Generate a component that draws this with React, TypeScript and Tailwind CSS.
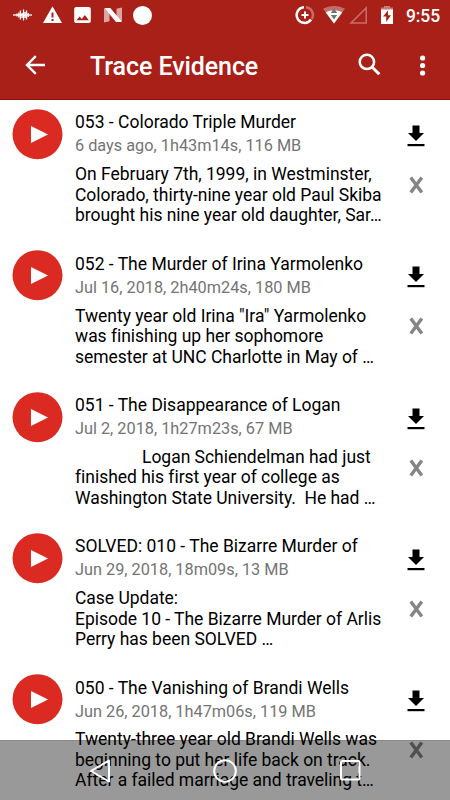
import clsx from 'clsx';

type Episode = {
  title: string;
  meta: string;
  lines: string[];
  indent?: boolean;
};

const episodes: Episode[] = [
  {
    title: '053 - Colorado Triple Murder',
    meta: '6 days ago, 1h43m14s, 116 MB',
    lines: ['On February 7th, 1999, in Westminster,', 'Colorado, thirty-nine year old Paul Skiba', 'brought his nine year old daughter, Sar…'],
  },
  {
    title: '052 - The Murder of Irina Yarmolenko',
    meta: 'Jul 16, 2018, 2h40m24s, 180 MB',
    lines: ['Twenty year old Irina "Ira" Yarmolenko', 'was finishing up her sophomore', 'semester at UNC Charlotte in May of …'],
  },
  {
    title: '051 - The Disappearance of Logan',
    meta: 'Jul 2, 2018, 1h27m23s, 67 MB',
    lines: ['Logan Schiendelman had just', 'finished his first year of college as', 'Washington State University.  He had …'],
    indent: true,
  },
  {
    title: 'SOLVED: 010 - The Bizarre Murder of',
    meta: 'Jun 29, 2018, 18m09s, 13 MB',
    lines: ['Case Update:', 'Episode 10 - The Bizarre Murder of Arlis', 'Perry has been SOLVED …'],
  },
  {
    title: '050 - The Vanishing of Brandi Wells',
    meta: 'Jun 26, 2018, 1h47m06s, 119 MB',
    lines: ['Twenty-three year old Brandi Wells was', 'beginning to put her life back on track.', 'After a failed marriage and traveling t…'],
  },
];

function StatusBar() {
  return (
    <div className="flex h-[30px] items-center justify-between pl-3 pr-[10px] text-white">
      <div className="flex items-center">
        <svg width="21" height="20" viewBox="0 0 21 20" stroke="currentColor" strokeWidth="1.3">
          <path d="M1 10h19" />
          <path d="M5 8.500v3M6.800 7.500v5M8.400 5.500v9M10 8v5M11.500 4.500v11M13 7v6M14.500 5.500v9M16.200 8v4" />
        </svg>
        <svg className="ml-[9px]" width="21" height="20" viewBox="0 0 21 20" fill="currentColor">
          <path fillRule="evenodd" d="M10.500 1.200 20 18H1ZM9.500 7.600v5h2v-5ZM9.500 14v2h2v-2Z" />
        </svg>
        <svg className="ml-[10px]" width="20" height="20" viewBox="0 0 20 20" fill="currentColor">
          <path fillRule="evenodd" d="M3.200 2h12.600c1.100 0 2 .9 2 2v12c0 1.100-.9 2-2 2H3.200c-1.100 0-2-.9-2-2V4c0-1.100.9-2 2-2ZM3.500 15.300h12.300l-3.900-5.200-3.100 4-2.200-2.600Z" />
        </svg>
        <svg className="ml-[10px]" width="20" height="20" viewBox="0 0 20 20" fill="currentColor">
          <path opacity=".6" d="M1 3.600 2.300 3l4.200 4v9.300L1 17.500ZM13.500 3.700l5.500-1.200v13.700l-1.300.6-4.200-4Z" />
          <path d="M2.300 3h5L18.700 16.500l-.7.500h-5L2.300 4Z" />
        </svg>
        <span className="ml-[10px] size-[19px] rounded-full bg-white" />
      </div>
      <div className="flex items-center">
        <svg width="20" height="20" viewBox="0 0 20 20" fill="none" stroke="currentColor" strokeWidth="2.500">
          <path opacity=".35" d="M11 2.200A7.800 7.800 0 0 1 16.800 14" />
          <path d="M9 2.200A7.850 7.850 0 1 0 16 14.500" />
          <path strokeWidth="2" d="M10 6.500v7M6.500 10h7" />
        </svg>
        <svg className="ml-[8px]" width="22" height="20" viewBox="0 0 22 20" fill="currentColor">
          <path opacity=".35" d="M0 3.800C6-.1 16-.1 22 3.800L11 18.500Z" />
          <path d="M2.800 7.500C7 4.500 15 4.500 19.200 7.500L11 18.500Z" />
          <path fill="#747474" d="M11 3.200 14.200 8H7.800ZM7.800 10h6.400L11 14.500Z" />
        </svg>
        <svg className="ml-[4px]" width="19" height="20" viewBox="0 0 19 20" fill="none" stroke="currentColor" strokeWidth="1.500" opacity=".35">
          <path d="M2 18 17.200 2.900V18Z" />
        </svg>
        <svg className="ml-[12px]" width="14" height="20" viewBox="0 0 14 20" fill="currentColor">
          <path opacity=".4" d="M4 1h6v1.500h3V5H1V2.500h3Z" />
          <path fillRule="evenodd" d="M1 4.500h12V19H1ZM8 5.500l-5 6h3.200V17l4.800-6.700H8Z" />
        </svg>
        <span className="ml-[12px] pt-[2px] text-[17.500px] font-medium leading-5 tracking-[-0.100px]">9:55</span>
      </div>
    </div>
  );
}

function AppBar() {
  return (
    <div className="flex h-[70px] items-center border-b border-[#8f0e08] text-white">
      <svg className="ml-[25px] mt-px" width="21" height="20" viewBox="0 0 21 20" fill="none" stroke="currentColor" strokeWidth="2.400">
        <path d="M20 10H2.500M10.800 1.200 2 10l8.800 8.800" />
      </svg>
      <h1 className="ml-[44px] flex-1 pt-[5px] text-[25px] font-medium leading-8 tracking-[-0.080px]">Trace Evidence</h1>
      <svg className="mr-[39px]" width="23" height="23" viewBox="0 0 23 23" fill="none" stroke="currentColor" strokeWidth="2.500">
        <circle cx="8.900" cy="8.900" r="7.200" />
        <path strokeWidth="3" d="m14 14 7.300 7.300" />
      </svg>
      <svg className="mr-[24px] mt-px" width="6" height="21" viewBox="0 0 6 21" fill="currentColor">
        <circle cx="2.600" cy="3" r="2.600" />
        <circle cx="2.600" cy="10.500" r="2.600" />
        <circle cx="2.600" cy="18" r="2.600" />
      </svg>
    </div>
  );
}

function EpisodeRow({ episode }: { episode: Episode }) {
  return (
    <li className="flex h-[141.300px] pl-3">
      <button className="mt-[9px] size-[51px] shrink-0">
        <svg width="51" height="51" viewBox="0 0 51 51">
          <circle cx="25.500" cy="25.200" r="25" fill="#db2a21" />
          <path fill="#fff" d="M19 17v17l17-8.500Z" />
        </svg>
      </button>
      <div className="ml-3 mt-[11.400px] flex-1 whitespace-pre">
        <h2 className="text-[17.500px] leading-[23px] text-black">{episode.title}</h2>
        <p className="text-[16.300px] leading-[23px] text-[#747474]">{episode.meta}</p>
        <div className="mt-[6.900px] text-[17.500px] leading-[20.500px] tracking-[-0.025px] text-black">
          {episode.lines.map((line, i) => (
            <p key={line} className={clsx(i === 0 && episode.indent && 'pl-[67px]')}>{line}</p>
          ))}
        </div>
      </div>
      <div className="flex w-[68px] shrink-0 flex-col items-center">
        <svg className="mt-[25px]" width="18" height="22" viewBox="0 0 18 22">
          <path d="M5.500.5h7v7.500h4.500L9 16 1 8h4.500Z" />
          <path d="M.5 19h17v2.200H.5Z" />
        </svg>
        <svg className="mt-[29px]" width="16" height="18" viewBox="0 0 16 18" fill="none" stroke="#858585" strokeWidth="3.400">
          <path d="m2.800 1.500 11 15M13.800 1.500l-11 15" />
        </svg>
      </div>
    </li>
  );
}

function NavBar() {
  return (
    <nav className="absolute inset-x-0 bottom-0 flex h-[60px] items-center justify-between border-t border-black/10 bg-black/40 px-[89px] text-white">
      <svg width="22" height="24" viewBox="0 0 22 24" fill="none" stroke="currentColor" strokeWidth="2">
        <path strokeLinejoin="round" d="M20 1.500v21L2 12Z" />
      </svg>
      <svg width="24" height="24" viewBox="0 0 24 24" fill="none" stroke="currentColor" strokeWidth="2">
        <circle cx="12" cy="12" r="10.800" />
      </svg>
      <svg width="22" height="24" viewBox="0 0 22 24" fill="none" stroke="currentColor" strokeWidth="2">
        <rect x="2" y="2" width="18.500" height="18.500" rx="1" />
      </svg>
    </nav>
  );
}

export default function App() {
  return (
    <div className="relative h-[800px] w-[450px] overflow-hidden bg-white font-[Roboto,sans-serif]">
      <header className="bg-[#a82018]">
        <StatusBar />
        <AppBar />
      </header>
      <ul>
        {episodes.map((episode) => (
          <EpisodeRow key={episode.title} episode={episode} />
        ))}
      </ul>
      <NavBar />
    </div>
  );
}
